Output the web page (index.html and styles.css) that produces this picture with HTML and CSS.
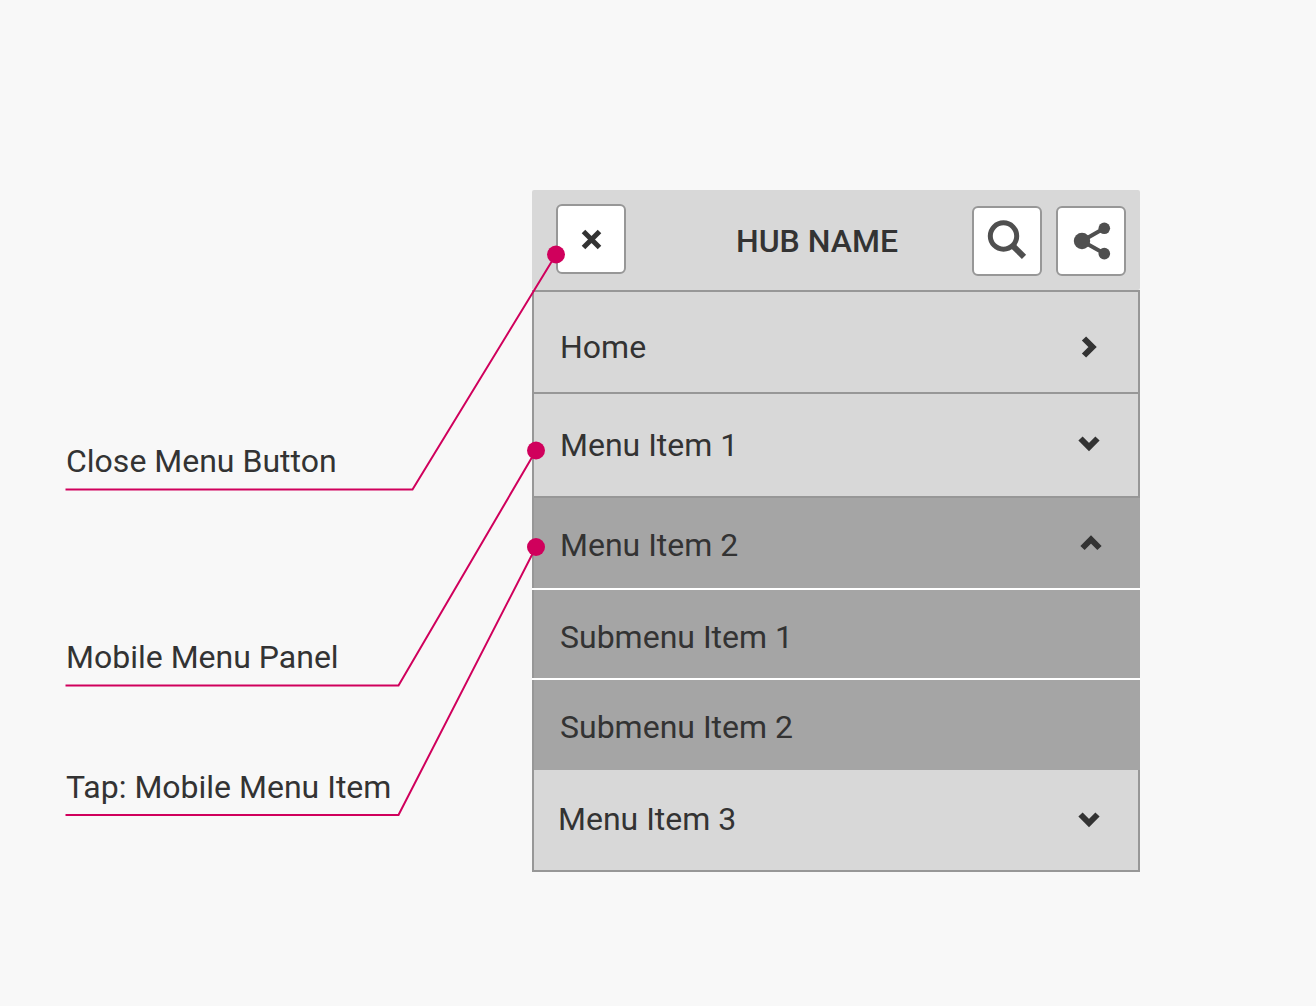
FILE: index.html
```html
<!DOCTYPE html>
<html lang="en">
<head>
<meta charset="utf-8">
<meta name="viewport" content="width=device-width, initial-scale=1">
<title>Mobile menu</title>
<link rel="stylesheet" href="styles.css">
</head>
<body>
<main class="spec">
  <ul class="labels">
    <li>Close Menu Button</li>
    <li>Mobile Menu Panel</li>
    <li>Tap: Mobile Menu Item</li>
  </ul>

  <section class="panel">
    <header class="bar">
      <button class="tool tool-close" type="button" aria-label="Close menu">
        <svg viewBox="0 0 66 66" aria-hidden="true"><path class="cross" d="M25.500 25.500 41.500 41.500M41.500 25.500 25.500 41.500"/></svg>
      </button>
      <h1 class="title">HUB NAME</h1>
      <div class="actions">
        <button class="tool" type="button" aria-label="Search">
          <svg viewBox="0 0 66 66" aria-hidden="true"><circle class="ring" cx="29.5" cy="28" r="13.2"/><path class="handle" d="M38 37 50 48.8"/></svg>
        </button>
        <button class="tool" type="button" aria-label="Share">
          <svg viewBox="0 0 66 66" aria-hidden="true"><path class="link" d="M46.3 20.3 24 33 46.3 45.6"/><circle class="node" cx="24" cy="33" r="8.2"/><circle class="node" cx="46.3" cy="20.3" r="5.8"/><circle class="node" cx="46.3" cy="45.6" r="5.8"/></svg>
        </button>
      </div>
    </header>

    <nav aria-label="Mobile menu">
      <ul class="menu">
        <li><a class="row row-home" href="#home">Home
          <svg class="chevron" viewBox="0 0 24 24" aria-hidden="true"><path d="M7 3.500 15.500 12 7 20.500"/></svg></a></li>
        <li><button class="row row-first" type="button" aria-expanded="false">Menu Item 1
          <svg class="chevron" viewBox="0 0 24 24" aria-hidden="true"><path d="M3.500 5.500 12 14 20.500 5.500"/></svg></button></li>
        <li class="branch">
          <button class="row row-open" type="button" aria-expanded="true">Menu Item 2
            <svg class="chevron" viewBox="0 0 24 24" aria-hidden="true"><path d="M3.500 15 12 6.500 20.500 15"/></svg></button>
          <ul class="submenu">
            <li><a class="row row-sub" href="#sub1">Submenu Item 1</a></li>
            <li><a class="row row-sub row-sub-last" href="#sub2">Submenu Item 2</a></li>
          </ul>
        </li>
        <li><button class="row row-last" type="button" aria-expanded="false">Menu Item 3
          <svg class="chevron" viewBox="0 0 24 24" aria-hidden="true"><path d="M3.500 7.500 12 16 20.500 7.500"/></svg></button></li>
      </ul>
    </nav>
  </section>

  <svg class="leaders" width="600" height="830" aria-hidden="true">
    <path d="M65.5 489.5H412.5L556 254.5"/>
    <path d="M65.5 685.5H398.5L536 450.5"/>
    <path d="M65.5 815H398.5L536 547"/>
    <circle cx="556" cy="254.5" r="9"/>
    <circle cx="536" cy="450.5" r="9"/>
    <circle cx="536" cy="547" r="9"/>
  </svg>
</main>
</body>
</html>
```
FILE: styles.css
```css
* {
  box-sizing: border-box;
}

body {
  margin: 0;
  background: #f8f8f8;
  color: #333;
  font: 400 32px/40px Roboto, sans-serif;
}

ul {
  list-style: none;
  margin: 0;
  padding: 0;
}

button {
  font: inherit;
  color: inherit;
  cursor: pointer;
}

svg {
  display: block;
  fill: none;
}

.spec {
  position: relative;
  display: grid;
  grid-template-columns: 466px minmax(0, 1fr);
  align-items: start;
  padding: 190px 176px 134px 66px;
}

/* Callout labels */
.labels {
  padding-top: 251px;
}

.labels li + li {
  margin-top: 156px;
}

.labels li + li + li {
  margin-top: 90px;
}

.leaders {
  position: absolute;
  top: 0;
  left: 0;
  pointer-events: none;
  stroke: #d0005c;
  stroke-width: 2;
}

.leaders circle {
  fill: #d0005c;
  stroke: none;
}

/* Header */
.bar {
  display: flex;
  align-items: center;
  padding: 14px 14px 14px 24px;
  background: #d8d8d8;
  border-radius: 2px;
}

.title {
  flex: 1;
  margin: 0;
  padding: 2px 0 0 36px;
  font: inherit;
  font-weight: 500;
  text-align: center;
}

.actions {
  display: flex;
  gap: 14px;
  padding-top: 2px;
}

.tool {
  width: 70px;
  height: 70px;
  padding: 0;
  background: #fff;
  border: 2px solid #979797;
  border-radius: 6px;
}

.tool-close {
  align-self: flex-start;
}

.cross {
  stroke: #333;
  stroke-width: 5;
}

.ring {
  stroke: #4f4f4f;
  stroke-width: 5;
}

.handle {
  stroke: #4f4f4f;
  stroke-width: 6;
}

.link {
  stroke: #4f4f4f;
  stroke-width: 4;
}

.node {
  fill: #4f4f4f;
}

/* Menu rows */
.row {
  display: flex;
  align-items: center;
  justify-content: space-between;
  width: 100%;
  padding: 30px 37px 30px 26px;
  background: #d8d8d8;
  border: 0 solid #979797;
  border-width: 0 2px 2px;
  border-radius: 0;
  color: inherit;
  text-align: left;
  text-decoration: none;
}

.row-home {
  border-top-width: 2px;
  padding-top: 35px;
  padding-bottom: 25px;
}

.row-first {
  padding-top: 31px;
  padding-bottom: 31px;
}

.row-last {
  padding-left: 24px;
  padding-top: 29px;
  padding-bottom: 31px;
}

.branch,
.submenu {
  display: grid;
  gap: 2px;
  background: #fff;
}

.row-open,
.row-sub {
  background: #a5a5a5;
  border-width: 0 2px;
  border-right-color: #a5a5a5;
  padding-top: 27px;
  padding-bottom: 21px;
}

.row-open {
  padding-bottom: 23px;
  padding-right: 35px;
}

.row-sub-last {
  padding-bottom: 23px;
}

.chevron {
  width: 24px;
  height: 24px;
  stroke: #333;
  stroke-width: 6;
}
```
